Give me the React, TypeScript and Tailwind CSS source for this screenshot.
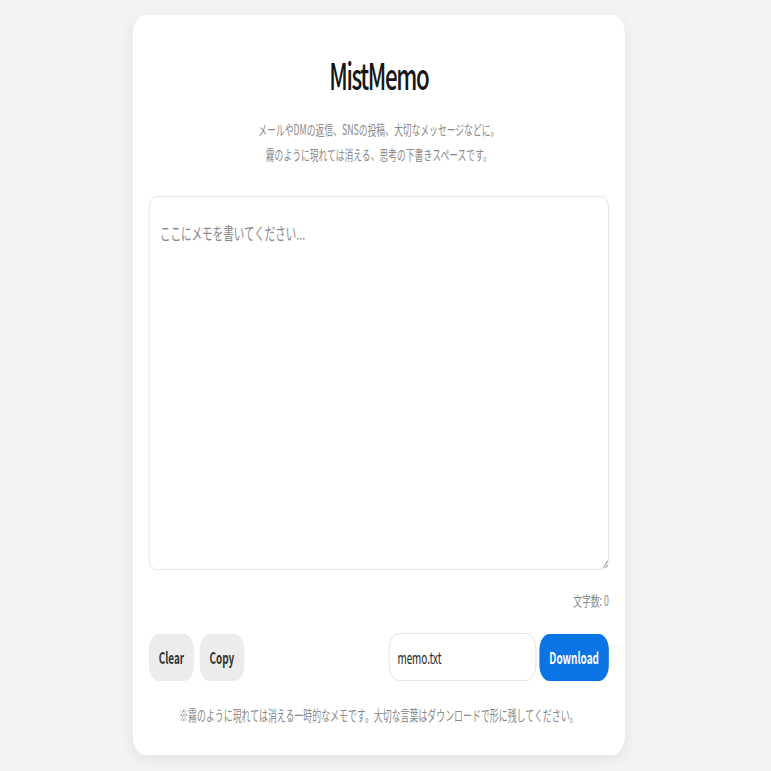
import React, { useState } from "react";

const App = () => {
  const [text, setText] = useState("");
  const [fileName, setFileName] = useState("memo.txt");

  return (
    <div className="min-h-screen w-full overflow-hidden bg-[#f3f3f3] font-['Noto_Sans_CJK_JP',sans-serif]">
      {/* the whole sheet is drawn condensed, as in the reference */}
      <div className="w-[1244px] origin-left scale-x-[0.62] pt-[15px] pr-[22px] flex justify-center">
        <div className="w-[794px] bg-white rounded-[20px] shadow-[0_4px_18px_rgba(0,0,0,0.07)] px-[26px] pt-[35px] pb-[30px] flex flex-col">
          <h1 className="text-center text-[36px] leading-[48px] tracking-[-0.06em] font-medium text-[#151515]">
            MistMemo
          </h1>
          <p className="mt-[19px] text-center text-[14.2px] leading-[25px] text-[#8a8a8a]">
            メールやDMの返信、SNSの投稿、大切なメッセージなどに。
            <br />
            霧のように現れては消える、思考の下書きスペースです。
          </p>

          <textarea
            value={text}
            onChange={(e) => setText(e.target.value)}
            placeholder="ここにメモを書いてください..."
            className="mt-[29px] h-[374px] w-full rounded-xl border border-[#dcdcdc] px-[17px] pt-[23px] text-[17px] leading-[1.5] text-[#222] placeholder:text-[#8a8a8a] outline-none"
          />

          <div className="mt-5 text-right text-[14.2px] leading-[21px] text-[#8a8a8a]">
            文字数: {text.length}
          </div>

          <div className="mt-[22px] flex items-center justify-between">
            <div className="flex gap-[9px]">
              <button className="h-[47px] px-4 rounded-2xl bg-[#ececec] text-[16px] font-bold text-[#333]">
                Clear
              </button>
              <button className="h-[47px] px-4 rounded-2xl bg-[#ececec] text-[16px] font-bold text-[#333]">
                Copy
              </button>
            </div>
            <div className="flex items-center gap-[5px]">
              <input
                value={fileName}
                onChange={(e) => setFileName(e.target.value)}
                className="h-[48px] w-[238px] rounded-2xl border border-[#dcdcdc] px-[13px] text-[16px] text-[#222] outline-none"
              />
              <button className="h-[47px] px-4 rounded-2xl bg-[#0b74e5] text-[16px] font-bold text-white">
                Download
              </button>
            </div>
          </div>

          <p className="mt-[23px] text-center text-[14.4px] leading-[21px] text-[#8a8a8a]">
            ※霧のように現れては消える一時的なメモです。大切な言葉はダウンロードで形に残してください。
          </p>
        </div>
      </div>
    </div>
  );
};

export default App;
